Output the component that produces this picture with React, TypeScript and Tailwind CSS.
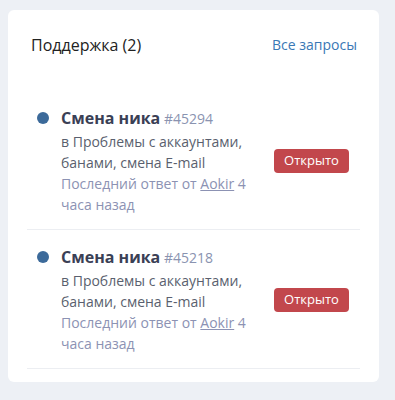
import React from 'react';

type Ticket = {
  id: number;
  title: string;
  category: string;
  author: string;
  time: string;
};

const tickets: Ticket[] = [
  { id: 45294, title: 'Смена ника', category: 'Проблемы с аккаунтами, банами, смена E-mail', author: 'Aokir', time: '4 часа назад' },
  { id: 45218, title: 'Смена ника', category: 'Проблемы с аккаунтами, банами, смена E-mail', author: 'Aokir', time: '4 часа назад' },
];

const TicketRow: React.FC<{ ticket: Ticket }> = ({ ticket }) => {
  return (
    <div className="flex items-center border-b border-[#eceef2] pl-[10px] pr-[11px] pt-[15px] pb-[14px]">
      <div className="flex self-start">
        <span className="mt-[6px] h-[12px] w-[12px] rounded-full bg-[#3c6a9a]"></span>
      </div>
      <div className="ml-[12px] w-[200px] text-[14px] leading-[21px]">
        <div className="leading-[24px]">
          <span className="text-[16px] font-bold text-[#3a4055]">{ticket.title}</span>{' '}
          <span className="text-[#8a93b0]">#{ticket.id}</span>
        </div>
        <div className="text-[#5a5f6e]">в {ticket.category}</div>
        <div className="text-[#8c92b3]">
          Последний ответ от <a href="#" className="underline">{ticket.author}</a> {ticket.time}
        </div>
      </div>
      <button className="ml-auto h-[24px] w-[75px] rounded-[4px] bg-[#c2474c] text-[13px] text-white">
        Открыто
      </button>
    </div>
  );
};

export default function App() {
  return (
    <div className="min-h-[400px] bg-[#edf0f5] pt-[10px] pl-[8px] pr-[16px] pb-[18px]" style={{ fontFamily: '"Open Sans", "Noto Sans", sans-serif' }}>
      <div className="rounded-[6px] bg-white px-[19px] pt-[24px] pb-[13px]">
        <div className="flex items-center justify-between pl-[4px] pr-[3px] leading-[22px]">
          <h2 className="text-[16px] text-[#222]">Поддержка (2)</h2>
          <a href="#" className="text-[14px] text-[#3a78b5]">Все запросы</a>
        </div>
        <div className="mt-[35px]">
          {tickets.map((t) => (
            <TicketRow key={t.id} ticket={t} />
          ))}
        </div>
      </div>
    </div>
  );
}
